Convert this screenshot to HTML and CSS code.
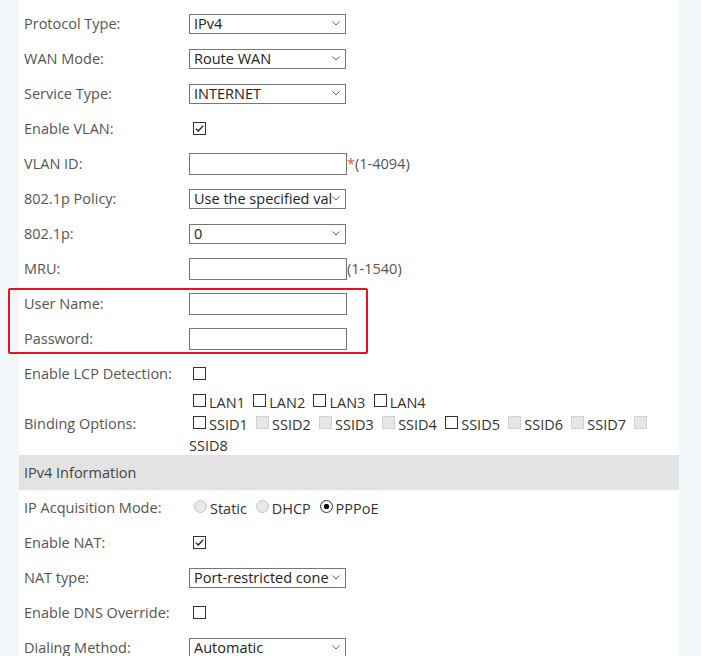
FILE: index.html
```html
<!DOCTYPE html>
<html lang="en">
<head>
    <meta charset="UTF-8">
    <meta name="viewport" content="width=device-width, initial-scale=1.0">
    <title>WAN Configuration</title>
    <link rel="stylesheet" href="styles.css">
</head>
<body>
    <div class="page">
        <div class="panel">
            <div class="row">
                <div class="label">Protocol Type:</div>
                <div class="field"><select class="sel"><option>IPv4</option></select></div>
            </div>
            <div class="row">
                <div class="label">WAN Mode:</div>
                <div class="field"><select class="sel"><option>Route WAN</option></select></div>
            </div>
            <div class="row">
                <div class="label">Service Type:</div>
                <div class="field"><select class="sel"><option>INTERNET</option></select></div>
            </div>
            <div class="row">
                <div class="label">Enable VLAN:</div>
                <div class="field"><input type="checkbox" class="chk" checked></div>
            </div>
            <div class="row">
                <div class="label">VLAN ID:</div>
                <div class="field"><input type="text" class="txt"><span class="req">*</span><span class="hint">(1-4094)</span></div>
            </div>
            <div class="row">
                <div class="label">802.1p Policy:</div>
                <div class="field"><select class="sel"><option>Use the specified value</option></select></div>
            </div>
            <div class="row">
                <div class="label">802.1p:</div>
                <div class="field"><select class="sel"><option>0</option></select></div>
            </div>
            <div class="row">
                <div class="label">MRU:</div>
                <div class="field"><input type="text" class="txt"><span class="hint">(1-1540)</span></div>
            </div>
            <div class="row">
                <div class="label">User Name:</div>
                <div class="field"><input type="text" class="txt"></div>
            </div>
            <div class="row">
                <div class="label">Password:</div>
                <div class="field"><input type="password" class="txt"></div>
            </div>
            <div class="row">
                <div class="label">Enable LCP Detection:</div>
                <div class="field"><input type="checkbox" class="chk"></div>
            </div>
            <div class="row tall">
                <div class="label">Binding Options:</div>
                <div class="field wrap">
                    <div class="line">
                        <label class="opt"><input type="checkbox" class="chk"><wbr>LAN1</label>
                        <label class="opt"><input type="checkbox" class="chk"><wbr>LAN2</label>
                        <label class="opt"><input type="checkbox" class="chk"><wbr>LAN3</label>
                        <label class="opt"><input type="checkbox" class="chk"><wbr>LAN4</label>
                    </div>
                    <div class="line">
                        <label class="opt"><input type="checkbox" class="chk"><wbr>SSID1</label>
                        <label class="opt"><input type="checkbox" class="chk" disabled><wbr>SSID2</label>
                        <label class="opt"><input type="checkbox" class="chk" disabled><wbr>SSID3</label>
                        <label class="opt"><input type="checkbox" class="chk" disabled><wbr>SSID4</label>
                        <label class="opt"><input type="checkbox" class="chk"><wbr>SSID5</label>
                        <label class="opt"><input type="checkbox" class="chk" disabled><wbr>SSID6</label>
                        <label class="opt"><input type="checkbox" class="chk" disabled><wbr>SSID7</label>
                        <label class="opt"><input type="checkbox" class="chk" disabled><wbr>SSID8</label>
                    </div>
                </div>
            </div>
            <div class="section">IPv4 Information</div>
            <div class="row">
                <div class="label">IP Acquisition Mode:</div>
                <div class="field radios">
                    <label class="opt"><input type="radio" name="mode" class="rad" disabled>Static</label>
                    <label class="opt"><input type="radio" name="mode" class="rad" disabled>DHCP</label>
                    <label class="opt"><input type="radio" name="mode" class="rad" checked>PPPoE</label>
                </div>
            </div>
            <div class="row">
                <div class="label">Enable NAT:</div>
                <div class="field"><input type="checkbox" class="chk" checked></div>
            </div>
            <div class="row">
                <div class="label">NAT type:</div>
                <div class="field"><select class="sel"><option>Port-restricted cone NAT</option></select></div>
            </div>
            <div class="row">
                <div class="label">Enable DNS Override:</div>
                <div class="field"><input type="checkbox" class="chk"></div>
            </div>
            <div class="row">
                <div class="label">Dialing Method:</div>
                <div class="field"><select class="sel"><option>Automatic</option></select></div>
            </div>
        </div>
        <!-- highlight round the account fields -->
        <div class="mark"></div>
    </div>
</body>
</html>
```

FILE: styles.css
```css
html, body {
    margin: 0;
    padding: 0;
}
body {
    font-family: 'Open Sans', 'Noto Sans', sans-serif;
    font-size: 14.5px;
    color: #555;
    background-color: #f4f7fa;
}
.page {
    position: relative;
    height: 656px;
    overflow: hidden;
}
.panel {
    margin-left: 19px;
    width: 660px;
    padding-top: 6px;
    background-color: #fff;
    min-height: 700px;
}
.row {
    display: flex;
    align-items: center;
    height: 35px;
}
.row.tall {
    height: 64px;
    align-items: flex-start;
    box-sizing: border-box;
}
.row.tall .label {
    align-self: center;
}
.label {
    width: 165px;
    padding-left: 5px;
    flex-shrink: 0;
}
.field {
    display: flex;
    align-items: center;
    color: #333;
}
.field.wrap {
    display: block;
    width: 470px;
    line-height: 21px;
}
.field.wrap .opt {
    margin-right: 0.5px;
}
.field.radios {
    display: block;
}
.line {
    display: block;
}
.sel {
    appearance: none;
    -webkit-appearance: none;
    width: 157px;
    height: 20px;
    margin: 0;
    padding: 0 13px 0 4px;
    border: 1px solid #767676;
    border-radius: 0;
    background: #fff url("data:image/svg+xml,%3Csvg xmlns='http://www.w3.org/2000/svg' width='8' height='5' viewBox='0 0 8 5'%3E%3Cpath d='M0.5 0.5 L4 4 L7.5 0.5' fill='none' stroke='%23666' stroke-width='1'/%3E%3C/svg%3E") no-repeat right 5px center;
    font-family: inherit;
    font-size: 14.5px;
    line-height: 18px;
    color: #222;
}
.txt {
    width: 158px;
    height: 22px;
    margin: 0;
    padding: 0 4px;
    box-sizing: border-box;
    border: 1px solid #767676;
    border-radius: 0;
    font-family: inherit;
    font-size: 14px;
    outline: none;
}
.req {
    color: #e05a2b;
}
.hint {
    color: #555;
}
.chk, .rad {
    appearance: none;
    -webkit-appearance: none;
    width: 13px;
    height: 13px;
    margin: 3px 3px 3px 4px;
    box-sizing: border-box;
    border: 1px solid #333;
    background: #fff;
    vertical-align: -2px;
}
.chk:checked {
    background: #fff url("data:image/svg+xml,%3Csvg xmlns='http://www.w3.org/2000/svg' width='11' height='11' viewBox='0 0 11 11'%3E%3Cpath d='M1.8 5.6 L4.2 8 L9.2 2.8' fill='none' stroke='%23222' stroke-width='1.3'/%3E%3C/svg%3E") no-repeat center;
}
.chk:disabled {
    background: #e6e6e6;
    border-color: #d2d2d2;
}
.rad {
    margin: 3px 3px 3px 5px;
    border-radius: 50%;
    border-color: #bbb;
}
.rad:disabled {
    background: #e8e8e8;
    border-color: #c6c6c6;
}
.rad:checked {
    border-color: #333;
    background: radial-gradient(circle, #111 0 2.5px, #fff 3px);
}
.section {
    height: 35px;
    line-height: 35px;
    padding-left: 5px;
    background-color: #e3e3e3;
    color: #444;
}
.mark {
    position: absolute;
    left: 8px;
    top: 288px;
    width: 360px;
    height: 66px;
    box-sizing: border-box;
    border: 2px solid #e8121c;
    border-radius: 2px;
}
```
